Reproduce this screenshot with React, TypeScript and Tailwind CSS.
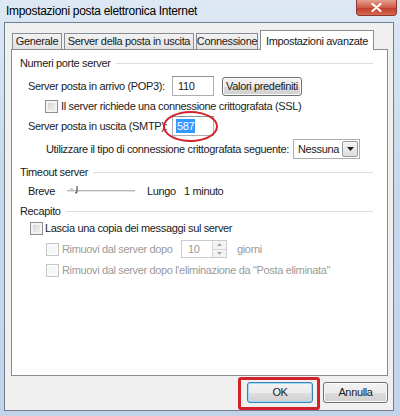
import { FC, ReactNode } from 'react';

const font = { fontFamily: '"Liberation Sans", Arial, sans-serif' };

const Checkbox: FC<{ disabled?: boolean }> = ({ disabled }) => (
  <span
    className={
      disabled
        ? 'block w-[13px] h-[13px] shrink-0 border border-[#c4c6c8] bg-[#f6f6f6] shadow-[inset_0_0_0_2px_#fbfbfb]'
        : 'block w-[13px] h-[13px] shrink-0 border border-[#8e8f8f] bg-[linear-gradient(135deg,#d0d0d0,#f6f6f6)] shadow-[inset_0_0_0_2px_#f4f4f4]'
    }
  />
);

const SectionHeader: FC<{ label: string }> = ({ label }) => (
  <div className="flex items-center h-[16px] pl-[8px] pr-[14px]">
    <span>{label}</span>
    <span className="flex-1 h-px ml-[5px] bg-[#d5dfe5]" />
  </div>
);

const Win7Button: FC<{ children: ReactNode; primary?: boolean; className?: string }> = ({
  children,
  primary,
  className = '',
}) => (
  <div
    className={`flex items-center justify-center rounded-[3px] border bg-[linear-gradient(#f3f3f3_0%,#ebebeb_50%,#dddddd_51%,#d0d0d0_100%)] ${
      primary
        ? 'border-[#3c7fb1] shadow-[inset_0_0_0_1px_#9ddcf6]'
        : 'border-[#707070] shadow-[inset_0_0_0_1px_#fafafa]'
    } ${className}`}
  >
    {children}
  </div>
);

export default function App() {
  return (
    <div
      className="relative w-[400px] h-[416px] overflow-hidden whitespace-nowrap bg-[linear-gradient(#dde8f4,#c9d9ec_40%,#c3d4e9)] text-[11px] tracking-[-0.35px] text-[#1b1b1b]"
      style={font}
    >
      {/* Title bar */}
      <div className="flex items-start justify-between h-[22px]">
        <span className="pl-[6px] pt-[4px] text-[12px] leading-[14px] tracking-[-0.3px] text-black">
          Impostazioni posta elettronica Internet
        </span>
        <div className="mr-[3px] w-[41px] h-[16px] rounded-b-[4px] border border-t-0 border-[#8a3a33] bg-[linear-gradient(#e3a08f,#cf5a45_50%,#c0392a_51%,#d86a4f)] flex items-center justify-center">
          <svg width="11" height="9" viewBox="0 0 11 9">
            <path d="M1.5 1 L9.5 8 M9.5 1 L1.5 8" stroke="#fff" strokeWidth="2.2" strokeLinecap="round" />
          </svg>
        </div>
      </div>

      {/* Client area */}
      <div className="ml-[4px] w-[390px] h-[389px] border border-[#6f7f8f] bg-[#f0f0f0]">
        {/* Tabs */}
        <div className="flex items-end h-[26px] pl-[7px] pt-[7px] relative z-10">
          <div className="w-[50px] h-[16px] flex items-center justify-center border border-b-0 border-[#898c95] bg-[linear-gradient(#f2f2f2,#e3e3e3)]">
            Generale
          </div>
          <div className="ml-[2px] w-[130px] h-[16px] flex items-center justify-center border border-b-0 border-[#898c95] bg-[linear-gradient(#f2f2f2,#e3e3e3)]">
            Server della posta in uscita
          </div>
          <div className="ml-[2px] w-[62px] h-[16px] flex items-center justify-center border border-b-0 border-[#898c95] bg-[linear-gradient(#f2f2f2,#e3e3e3)]">
            Connessione
          </div>
          <div className="ml-[2px] w-[114px] h-[20px] -mb-px flex items-start justify-center pt-[2px] border border-b-0 border-[#898c95] bg-white">
            Impostazioni avanzate
          </div>
        </div>

        {/* Panel */}
        <div className="ml-[6px] w-[377px] h-[327px] border border-[#898c95] bg-white pt-[5px]">
          <SectionHeader label="Numeri porte server" />

          <div className="flex items-center h-[22px] mt-[4px] pl-[16px]">
            <span className="w-[144px] shrink-0">Server posta in arrivo (POP3):</span>
            <div className="w-[42px] h-[20px] flex items-center pl-[5px] border border-[#abadb3] border-t-[#8e9196] bg-white">
              110
            </div>
            <Win7Button className="ml-[8px] w-[80px] h-[19px]">Valori predefiniti</Win7Button>
          </div>

          <div className="flex items-center h-[18px] pl-[33px]">
            <Checkbox />
            <span className="ml-[3px]">Il server richiede una connessione crittografata (SSL)</span>
          </div>

          <div className="flex items-center h-[22px] pl-[16px]">
            <span className="w-[144px] shrink-0">Server posta in uscita (SMTP):</span>
            <div className="w-[42px] h-[20px] flex items-center pl-[3px] border border-[#abadb3] border-t-[#8e9196] bg-white">
              <span className="bg-[#3399ff] text-white px-[1px] leading-[14px]">587</span>
            </div>
          </div>

          <div className="flex items-center h-[22px] mt-[1px] pl-[34px]">
            <span className="w-[247px] shrink-0">Utilizzare il tipo di connessione crittografata seguente:</span>
            <div className="w-[67px] h-[20px] flex items-center justify-between pl-[4px] pr-px border border-[#abadb3] bg-white">
              <span>Nessuna</span>
              <div className="w-[16px] h-[16px] flex items-center justify-center rounded-[2px] border border-[#9a9a9a] bg-[linear-gradient(#f6f6f6,#dcdcdc)]">
                <svg width="7" height="4" viewBox="0 0 7 4">
                  <path d="M0 0 H7 L3.5 4 Z" fill="#222" />
                </svg>
              </div>
            </div>
          </div>

          <div className="mt-[4px]">
            <SectionHeader label="Timeout server" />
          </div>

          <div className="flex items-center h-[20px] mt-[1px] pl-[16px]">
            <span className="w-[39px] shrink-0">Breve</span>
            <div className="relative w-[68px] h-[14px] flex items-center">
              <span className="w-full h-[2px] bg-[#e2e2e2] border-t border-[#b8b8b8]" />
              <svg className="absolute left-[3px] top-[1px]" width="10" height="10" viewBox="0 0 10 10">
                <path d="M0 4 H3" stroke="#a0a0a0" strokeWidth="1" />
                <path d="M7 1 V6 Q7 8 5 8" stroke="#555" strokeWidth="1.2" fill="none" />
              </svg>
            </div>
            <span className="ml-[12px] w-[37px] shrink-0">Lungo</span>
            <span>1 minuto</span>
          </div>

          <div className="mt-[2px]">
            <SectionHeader label="Recapito" />
          </div>

          <div className="flex items-center h-[18px] pl-[18px]">
            <Checkbox />
            <span className="ml-[2px]">Lascia una copia dei messaggi sul server</span>
          </div>

          <div className="flex items-center h-[20px] mt-[2px] pl-[34px] text-[#9a9a9a]">
            <Checkbox disabled />
            <span className="ml-[3px] w-[119px] shrink-0">Rimuovi dal server dopo</span>
            <div className="w-[46px] h-[18px] flex items-center justify-between pl-[6px] border border-[#c9cbcf] bg-white">
              <span>10</span>
              <div className="w-[14px] h-full flex flex-col border-l border-[#d4d4d4]">
                <div className="flex-1 flex items-center justify-center border-b border-[#d4d4d4] bg-[#f4f4f4]">
                  <svg width="5" height="3" viewBox="0 0 5 3">
                    <path d="M0 3 H5 L2.5 0 Z" fill="#a8a8a8" />
                  </svg>
                </div>
                <div className="flex-1 flex items-center justify-center bg-[#f4f4f4]">
                  <svg width="5" height="3" viewBox="0 0 5 3">
                    <path d="M0 0 H5 L2.5 3 Z" fill="#a8a8a8" />
                  </svg>
                </div>
              </div>
            </div>
            <span className="ml-[10px]">giorni</span>
          </div>

          <div className="flex items-center h-[18px] mt-[2px] pl-[34px] text-[#9a9a9a]">
            <Checkbox disabled />
            <span className="ml-[3px]">Rimuovi dal server dopo l'eliminazione da "Posta eliminata"</span>
          </div>
        </div>

        {/* Buttons */}
        <div className="flex justify-end gap-[10px] mt-[6px] mr-[5px]">
          <Win7Button primary className="w-[66px] h-[21px]">OK</Win7Button>
          <Win7Button className="w-[65px] h-[21px]">Annulla</Win7Button>
        </div>
      </div>

      {/* Red annotations */}
      <div className="absolute left-[163px] top-[111px] w-[55px] h-[31px] rounded-[50%] border-2 border-[#d2232a]" />
      <div className="absolute left-[238px] top-[377px] w-[82px] h-[33px] rounded-[3px] border-[3px] border-[#d2232a]" />
    </div>
  );
}
